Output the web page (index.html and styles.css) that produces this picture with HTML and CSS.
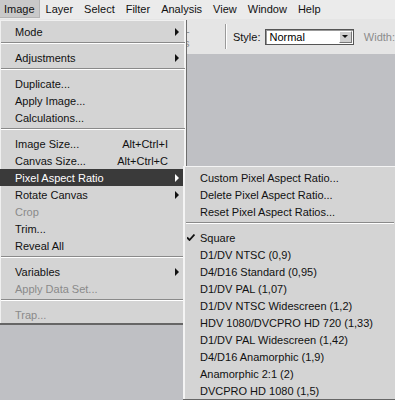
FILE: index.html
```html
<!DOCTYPE html>
<html lang="en">
<head>
    <meta charset="UTF-8">
    <title>Image menu - Pixel Aspect Ratio</title>
    <link rel="stylesheet" href="styles.css">
</head>
<body>
    <div class="menubar">
        <span class="menubar-item active">Image</span>
        <span class="menubar-item">Layer</span>
        <span class="menubar-item">Select</span>
        <span class="menubar-item">Filter</span>
        <span class="menubar-item">Analysis</span>
        <span class="menubar-item">View</span>
        <span class="menubar-item">Window</span>
        <span class="menubar-item">Help</span>
    </div>

    <div class="toolbar">
        <span class="tool-label dim">Anti-alias</span>
        <span class="tool-sep"></span>
        <span class="tool-label">Style:</span>
        <div class="select">
            <span class="select-value">Normal</span>
            <span class="select-button"><span class="down"></span></span>
        </div>
        <span class="tool-label dim">Width:</span>
    </div>

    <div class="workspace"></div>

    <!-- Image menu -->
    <div class="menu">
        <div class="item"><span class="label">Mode</span><span class="sub"><i class="arrow"></i></span></div>
        <div class="sep"></div>
        <div class="item"><span class="label">Adjustments</span><span class="sub"><i class="arrow"></i></span></div>
        <div class="sep"></div>
        <div class="item"><span class="label">Duplicate...</span><span class="sub"></span></div>
        <div class="item"><span class="label">Apply Image...</span><span class="sub"></span></div>
        <div class="item"><span class="label">Calculations...</span><span class="sub"></span></div>
        <div class="sep"></div>
        <div class="item"><span class="label">Image Size...</span><span class="key">Alt+Ctrl+I</span><span class="sub"></span></div>
        <div class="item"><span class="label">Canvas Size...</span><span class="key">Alt+Ctrl+C</span><span class="sub"></span></div>
        <div class="item selected"><span class="label">Pixel Aspect Ratio</span><span class="sub"><i class="arrow"></i></span></div>
        <div class="item"><span class="label">Rotate Canvas</span><span class="sub"><i class="arrow"></i></span></div>
        <div class="item disabled"><span class="label">Crop</span><span class="sub"></span></div>
        <div class="item"><span class="label">Trim...</span><span class="sub"></span></div>
        <div class="item"><span class="label">Reveal All</span><span class="sub"></span></div>
        <div class="sep"></div>
        <div class="item"><span class="label">Variables</span><span class="sub"><i class="arrow"></i></span></div>
        <div class="item disabled"><span class="label">Apply Data Set...</span><span class="sub"></span></div>
        <div class="sep"></div>
        <div class="item disabled"><span class="label">Trap...</span><span class="sub"></span></div>
    </div>

    <!-- Pixel Aspect Ratio submenu -->
    <div class="submenu">
        <div class="item"><span class="check"></span><span class="label">Custom Pixel Aspect Ratio...</span></div>
        <div class="item"><span class="check"></span><span class="label">Delete Pixel Aspect Ratio...</span></div>
        <div class="item"><span class="check"></span><span class="label">Reset Pixel Aspect Ratios...</span></div>
        <div class="sep"></div>
        <div class="item">
            <span class="check">
                <svg width="8" height="7" viewBox="0 0 8 7"><path d="M0 3.5 L2.5 6 L7.5 0.5" fill="none" stroke="#111" stroke-width="1.8"/></svg>
            </span>
            <span class="label">Square</span>
        </div>
        <div class="item"><span class="check"></span><span class="label">D1/DV NTSC (0,9)</span></div>
        <div class="item"><span class="check"></span><span class="label">D4/D16 Standard (0,95)</span></div>
        <div class="item"><span class="check"></span><span class="label">D1/DV PAL (1,07)</span></div>
        <div class="item"><span class="check"></span><span class="label">D1/DV NTSC Widescreen (1,2)</span></div>
        <div class="item"><span class="check"></span><span class="label">HDV 1080/DVCPRO HD 720 (1,33)</span></div>
        <div class="item"><span class="check"></span><span class="label">D1/DV PAL Widescreen (1,42)</span></div>
        <div class="item"><span class="check"></span><span class="label">D4/D16 Anamorphic (1,9)</span></div>
        <div class="item"><span class="check"></span><span class="label">Anamorphic 2:1 (2)</span></div>
        <div class="item"><span class="check"></span><span class="label">DVCPRO HD 1080 (1,5)</span></div>
    </div>
</body>
</html>
```

FILE: styles.css
```css
body {
    margin: 0;
    width: 395px;
    height: 400px;
    overflow: hidden;
    display: flex;
    flex-direction: column;
    background-color: #bfc0c4;
    font-family: "Liberation Sans", Arial, sans-serif;
    font-size: 11px;
    color: #111;
    position: relative;
}

/* menu bar */
.menubar {
    height: 19px;
    display: flex;
    align-items: flex-start;
    background-color: #ebebeb;
}

.menubar-item {
    height: 18px;
    line-height: 18px;
    padding: 0 5px 0 6px;
    box-sizing: border-box;
}

.menubar-item.active {
    background-color: #c9c9c9;
    border-right: 1px solid #b4b4b4;
    border-bottom: 1px solid #b4b4b4;
    padding-left: 4px;
    padding-right: 4px;
}

/* options bar */
.toolbar {
    height: 35px;
    display: flex;
    align-items: center;
    background-color: #e5e5e5;
    padding-left: 167px;
}

.tool-label.dim {
    color: #8c8c8c;
}

.tool-sep {
    width: 1px;
    height: 25px;
    background-color: #9a9a9a;
    border-right: 1px solid #fff;
    margin: 0 6px 0 13px;
}

.select {
    width: 89px;
    height: 16px;
    box-sizing: border-box;
    margin: 0 10px 0 5px;
    display: flex;
    align-items: center;
    background-color: #fff;
    border: 1px solid #555;
    box-shadow: inset 1px 1px 0 #999;
}

.select-value {
    flex: 1;
    padding-left: 3px;
    color: #000;
}

.select-button {
    width: 13px;
    height: 12px;
    margin-right: 1px;
    display: flex;
    align-items: center;
    justify-content: center;
    background-color: #cfcfcf;
    border: 1px solid #fff;
    border-right-color: #777;
    border-bottom-color: #777;
    box-sizing: border-box;
}

.down {
    width: 0;
    height: 0;
    border-left: 3px solid transparent;
    border-right: 3px solid transparent;
    border-top: 3px solid #111;
}

.workspace {
    flex: 1;
    background-color: #bfc0c4;
}

/* drop-down menus */
.menu,
.submenu {
    position: absolute;
    background-color: #d4d4d4;
    box-sizing: border-box;
}

.menu {
    top: 20px;
    left: 0;
    width: 187px;
    height: 305px;
    padding-top: 3px;
    border-right: 1px solid #6e6e6e;
    border-bottom: 2px solid #666;
    box-shadow: inset -2px 0 0 #f4f4f4, inset 1px 1px 0 #f0f0f0;
}

.submenu {
    top: 166px;
    left: 183px;
    width: 212px;
    height: 234px;
    padding-top: 3px;
    border-bottom: 1px solid #666;
    box-shadow: inset 2px 1px 0 #f4f4f4;
}

.item {
    height: 17px;
    display: flex;
    align-items: center;
    white-space: nowrap;
}

.menu .item {
    padding-left: 15px;
    margin-right: 1px;
}

.submenu .item {
    padding-left: 4px;
}

.item .label {
    flex: 1;
}

.item .key {
    text-align: right;
}

.item .sub {
    width: 17px;
    height: 17px;
    display: flex;
    align-items: center;
    padding-left: 7px;
    box-sizing: border-box;
}

.arrow {
    width: 0;
    height: 0;
    border-left: 4px solid #111;
    border-top: 4px solid transparent;
    border-bottom: 4px solid transparent;
}

.item.selected {
    background-color: #3a3a3a;
    color: #fff;
}

.item.selected .arrow {
    border-left-color: #fff;
}

.item.disabled {
    color: #8a8a8a;
}

.check {
    width: 13px;
    display: flex;
    align-items: center;
}

.sep {
    height: 0;
    margin: 2px 1px 5px 1px;
    border-top: 1px solid #8a8a8a;
    border-bottom: 1px solid #fff;
}

.submenu .sep {
    margin-left: 3px;
}
```
